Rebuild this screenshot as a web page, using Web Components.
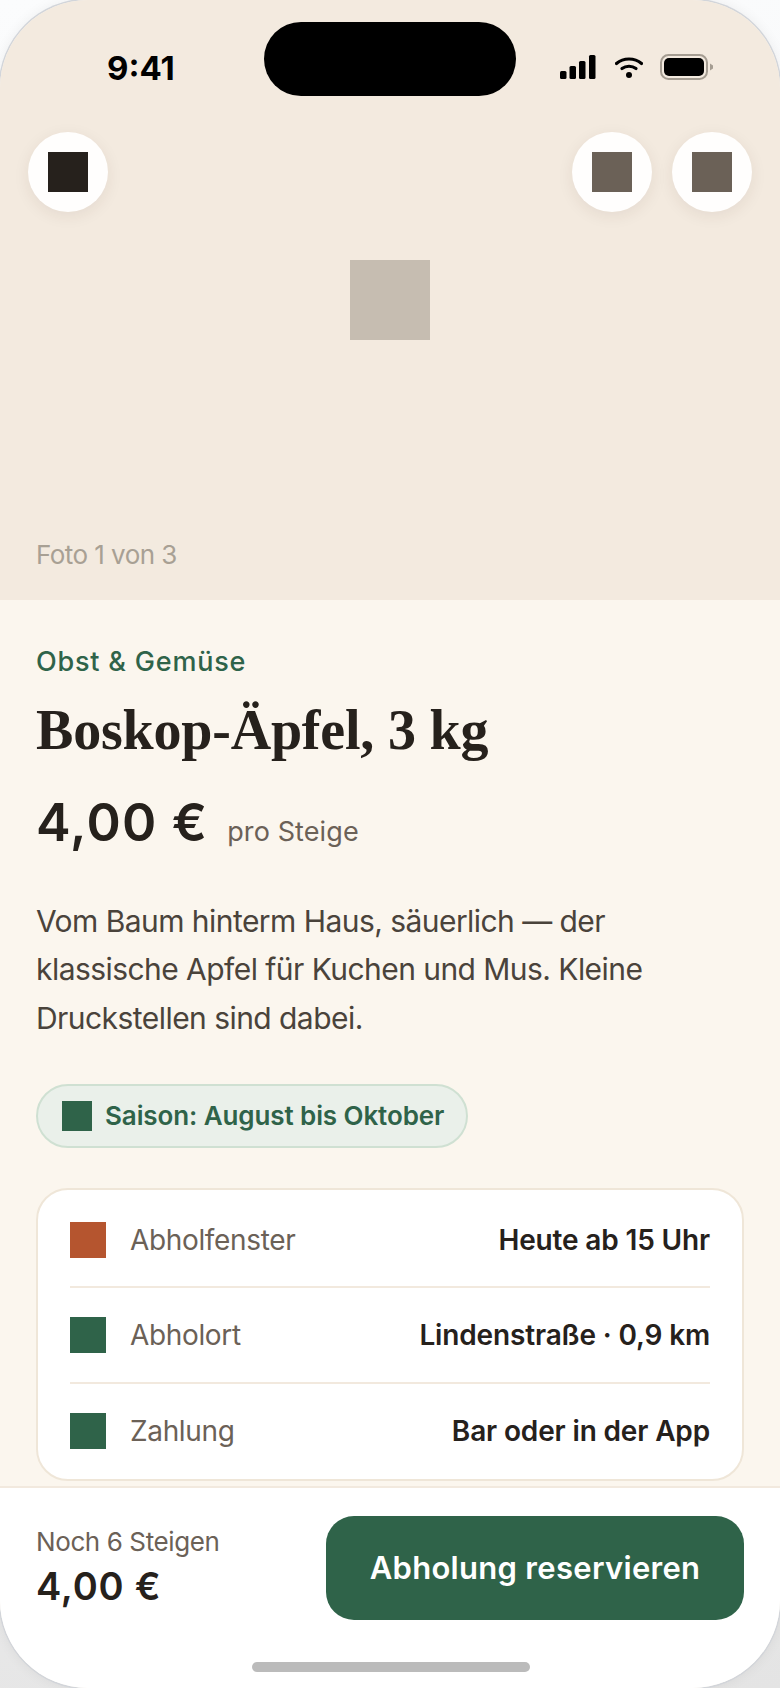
<!DOCTYPE html>
<html lang="de">
<head>
<meta charset="utf-8">
<title>Boskop-Äpfel</title>
<style>
  html, body { margin: 0; height: 100%; }
  body { background: linear-gradient(170deg, #fbfcfd 0%, #f4f4f5 50%, #e4e4e4 100%); font-family: "Inter", "Liberation Sans", sans-serif; }
</style>
</head>
<body>
<phone-frame>
  <photo-hero caption="Foto 1 von 3"></photo-hero>
  <listing-body></listing-body>
  <reserve-bar count="Noch 6 Steigen" price="4,00 €" action="Abholung reservieren"></reserve-bar>
</phone-frame>

<script>
class PhoneFrame extends HTMLElement {
  constructor() {
    super();
    this.attachShadow({ mode: 'open' });
  }
  connectedCallback() {
    this.shadowRoot.innerHTML = `
      <style>
        :host {
          display: flex; flex-direction: column;
          width: 780px; height: 1688px; box-sizing: border-box;
          position: relative; overflow: hidden;
          border-radius: 88px; background: #fbf6ee;
          box-shadow: 0 0 0 1.5px #d2d5da, 0 0 14px rgba(0, 0, 0, .07);
        }
        .island {
          position: absolute; left: 264px; top: 22px;
          width: 252px; height: 74px; border-radius: 37px; background: #000;
        }
      </style>
      <slot></slot>
      <div class="island"></div>
    `;
  }
}

class StatusBar extends HTMLElement {
  constructor() {
    super();
    this.attachShadow({ mode: 'open' });
  }
  connectedCallback() {
    this.shadowRoot.innerHTML = `
      <style>
        :host { display: flex; justify-content: space-between; align-items: center; height: 40px; padding: 48px 67px 0 107px; color: #000; }
        .time { font: 700 33px/40px "Inter", sans-serif; letter-spacing: 0; }
        .icons { display: flex; align-items: center; margin-bottom: 3px; }
        .wifi { margin: 0 17px 0 19px; }
        svg { display: block; }
      </style>
      <span class="time">9:41</span>
      <div class="icons">
        <svg width="36" height="24" viewBox="0 0 36 24" fill="#000">
          <rect x="0" y="16" width="6.5" height="8" rx="1.5"/>
          <rect x="9.5" y="11" width="6.5" height="13" rx="1.5"/>
          <rect x="19" y="6" width="6.5" height="18" rx="1.5"/>
          <rect x="29" y="0" width="6.5" height="24" rx="1.5"/>
        </svg>
        <svg class="wifi" width="28" height="22" viewBox="0 0 28 22" fill="none" stroke="#000" stroke-width="3.2" stroke-linecap="round">
          <path d="M1.5 7.5C8.5 1.5 19.5 1.5 26.5 7.5"/>
          <path d="M7 12.5C11 9.5 17 9.5 21 12.5"/>
          <circle cx="14" cy="19" r="3" fill="#000" stroke="none"/>
        </svg>
        <svg width="53" height="26" viewBox="0 0 53 26">
          <rect x="1" y="1" width="46" height="24" rx="7.5" fill="none" stroke="#a59d92" stroke-width="2"/>
          <rect x="4" y="4" width="40" height="18" rx="5" fill="#000"/>
          <path d="M50 9.5L53 11.5V14.5L50 16.5Z" fill="#a59d92"/>
        </svg>
      </div>
    `;
  }
}

class RoundButton extends HTMLElement {
  constructor() {
    super();
    this.attachShadow({ mode: 'open' });
  }
  connectedCallback() {
    const color = this.getAttribute('color') || '#6b6157';
    this.shadowRoot.innerHTML = `
      <style>
        :host {
          display: flex; align-items: center; justify-content: center;
          width: 80px; height: 80px; border-radius: 50%;
          background: #fffefd; box-shadow: 0 4px 16px rgba(60, 40, 20, .08);
        }
        i { display: block; width: 40px; height: 40px; background: ${color}; }
      </style>
      <i></i>
    `;
  }
}

class PhotoHero extends HTMLElement {
  constructor() {
    super();
    this.attachShadow({ mode: 'open' });
  }
  connectedCallback() {
    this.shadowRoot.innerHTML = `
      <style>
        :host { display: flex; flex-direction: column; height: 600px; background: #f3eadf; flex: none; }
        .actions { display: flex; gap: 20px; padding: 44px 28px 0; }
        .spacer { flex: 1; }
        .photo { width: 80px; height: 80px; margin: 48px auto 0; background: #c6bdb1; }
        .caption { margin-top: auto; padding: 0 36px 28px; font: 400 26px/34px "Inter", sans-serif; letter-spacing: -0.55px; color: #a8a094; }
      </style>
      <status-bar></status-bar>
      <div class="actions">
        <round-button color="#26211c"></round-button>
        <span class="spacer"></span>
        <round-button></round-button>
        <round-button></round-button>
      </div>
      <div class="photo"></div>
      <div class="caption">${this.getAttribute('caption')}</div>
    `;
  }
}

class SeasonChip extends HTMLElement {
  constructor() {
    super();
    this.attachShadow({ mode: 'open' });
  }
  connectedCallback() {
    this.shadowRoot.innerHTML = `
      <style>
        :host {
          display: inline-flex; align-items: center; gap: 13px;
          height: 64px; box-sizing: border-box; padding: 0 22px 0 24px;
          border: 2px solid #cfe0d2; border-radius: 32px; background: #eaf0ea;
          color: #2f6349; font: 600 26px/32px "Inter", sans-serif; letter-spacing: -0.1px;
        }
        i { display: block; width: 30px; height: 30px; background: #2f6349; }
      </style>
      <i></i><slot></slot>
    `;
  }
}

class InfoRow extends HTMLElement {
  constructor() {
    super();
    this.attachShadow({ mode: 'open' });
  }
  connectedCallback() {
    const color = this.getAttribute('color') || '#2f6349';
    this.shadowRoot.innerHTML = `
      <style>
        :host {
          display: flex; align-items: center; height: 96px; box-sizing: border-box;
          border-top: 2px solid #f2e9de;
        }
        :host([first]) { border-top: 0; padding-top: 4px; }
        :host([last]) { height: 97px; }
        i { display: block; flex: none; width: 36px; height: 36px; background: ${color}; margin-right: 24px; }
        .label { flex: 1; color: #6b6157; font: 400 28px/36px "Inter", sans-serif; letter-spacing: -0.35px; }
        .value { color: #26211c; font: 600 28px/36px "Inter", sans-serif; letter-spacing: -0.15px; }
      </style>
      <i></i>
      <span class="label">${this.getAttribute('label')}</span>
      <span class="value">${this.getAttribute('value')}</span>
    `;
  }
}

class ListingBody extends HTMLElement {
  constructor() {
    super();
    this.attachShadow({ mode: 'open' });
  }
  connectedCallback() {
    this.shadowRoot.innerHTML = `
      <style>
        :host { display: block; flex: 1; min-height: 0; overflow: hidden; padding: 46px 36px 0; color: #26211c; }
        .eyebrow { font: 500 27px/32px "Inter", sans-serif; letter-spacing: 0.8px; color: #2f6349; }
        h1 { margin: 18px 0 0; font: 700 56px/68px "Liberation Serif", serif; letter-spacing: -0.2px; }
        .price { display: flex; align-items: baseline; gap: 19px; margin-top: 27px; }
        .amount { font: 600 52px/64px "Inter", sans-serif; letter-spacing: 1.2px; }
        .unit { font: 400 27px/34px "Inter", sans-serif; letter-spacing: 0.1px; color: #6b6157; }
        p { margin: 42px 0 0; font: 400 30px/48.3px "Inter", sans-serif; letter-spacing: -0.55px; color: #4a433b; }
        .chip { margin-top: 42px; }
        .card {
          margin-top: 40px; padding: 0 32px; box-sizing: border-box;
          border: 2px solid #efe6d8; border-radius: 32px; background: #fff;
        }
      </style>
      <div class="eyebrow">Obst &amp; Gemüse</div>
      <h1>Boskop-Äpfel, 3 kg</h1>
      <div class="price"><span class="amount">4,00 €</span><span class="unit">pro Steige</span></div>
      <p>Vom Baum hinterm Haus, säuerlich — der klassische Apfel für Kuchen und Mus. Kleine Druckstellen sind dabei.</p>
      <div class="chip"><season-chip>Saison: August bis Oktober</season-chip></div>
      <div class="card">
        <info-row first color="#b5552f" label="Abholfenster" value="Heute ab 15 Uhr"></info-row>
        <info-row label="Abholort" value="Lindenstraße · 0,9 km"></info-row>
        <info-row last label="Zahlung" value="Bar oder in der App"></info-row>
      </div>
    `;
  }
}

class ReserveBar extends HTMLElement {
  constructor() {
    super();
    this.attachShadow({ mode: 'open' });
  }
  connectedCallback() {
    this.shadowRoot.innerHTML = `
      <style>
        :host {
          display: flex; align-items: flex-start; justify-content: space-between; flex: none;
          position: relative; height: 202px; box-sizing: border-box; padding: 28px 36px 0;
          background: #fff; border-top: 2px solid #f2e9de;
        }
        .count { margin-top: 10px; font: 400 26px/32px "Inter", sans-serif; letter-spacing: -0.4px; color: #6b6157; }
        .price { margin-top: 4px; font: 600 38px/48px "Inter", sans-serif; letter-spacing: 0.8px; color: #26211c; }
        button {
          width: 418px; height: 104px; border: 0; border-radius: 28px;
          background: #2f6349; color: #fff; font: 600 31px/40px "Inter", sans-serif; letter-spacing: 0.3px;
        }
        .home { position: absolute; left: 252px; bottom: 16px; width: 278px; height: 10px; border-radius: 5px; background: #bbb; }
      </style>
      <div>
        <div class="count">${this.getAttribute('count')}</div>
        <div class="price">${this.getAttribute('price')}</div>
      </div>
      <button>${this.getAttribute('action')}</button>
      <div class="home"></div>
    `;
  }
}

customElements.define('status-bar', StatusBar);
customElements.define('round-button', RoundButton);
customElements.define('season-chip', SeasonChip);
customElements.define('info-row', InfoRow);
customElements.define('photo-hero', PhotoHero);
customElements.define('listing-body', ListingBody);
customElements.define('reserve-bar', ReserveBar);
customElements.define('phone-frame', PhoneFrame);
</script>
</body>
</html>
